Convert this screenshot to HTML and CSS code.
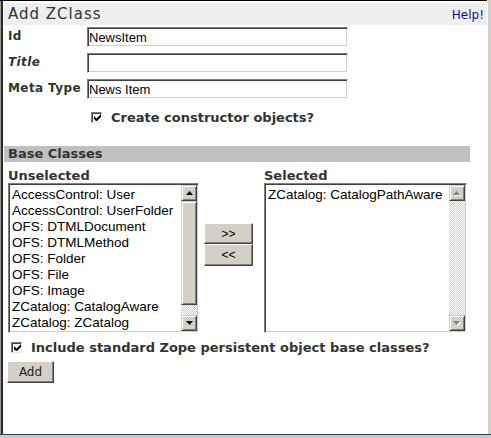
FILE: index.html
```html
<!DOCTYPE html>
<html>
<head>
<meta charset="utf-8">
<link rel="stylesheet" href="styles.css">
</head>
<body>
<div class="window">
  <div class="main">
    <div class="content">
      <div class="header">
        <span class="title">Add ZClass</span>
        <a class="help">Help!</a>
      </div>
      <div class="fields">
        <span class="label">Id</span>
        <input class="text" type="text" value="NewsItem">
        <span class="label italic">Title</span>
        <input class="text" type="text" value="">
        <span class="label">Meta Type</span>
        <input class="text" type="text" value="News Item">
      </div>
      <div class="check-row ctor">
        <span class="checkbox"><svg width="7" height="7" viewBox="0 0 7 7"><path d="M0 2v3l2 2h1l4-4V0L2.5 4.5z" fill="#000"/></svg></span>
        <span class="clabel">Create constructor objects?</span>
      </div>
      <div class="bar">Base Classes</div>
      <div class="lists">
        <div class="col left">
          <div class="collabel">Unselected</div>
          <div class="listbox lb-left">
            <div class="items">
              <div>AccessControl: User</div>
              <div>AccessControl: UserFolder</div>
              <div>OFS: DTMLDocument</div>
              <div>OFS: DTMLMethod</div>
              <div>OFS: Folder</div>
              <div>OFS: File</div>
              <div>OFS: Image</div>
              <div>ZCatalog: CatalogAware</div>
              <div>ZCatalog: ZCatalog</div>
            </div>
            <div class="sb">
              <div class="sb-btn"><svg width="7" height="4" viewBox="0 0 7 4"><polygon points="3.5,0 7,4 0,4" fill="#000"/></svg></div>
              <div class="sb-thumb"></div>
              <div class="sb-track"></div>
              <div class="sb-btn"><svg width="7" height="4" viewBox="0 0 7 4"><polygon points="0,0 7,0 3.5,4" fill="#000"/></svg></div>
            </div>
          </div>
        </div>
        <div class="movers">
          <button class="btn mover">&gt;&gt;</button>
          <button class="btn mover">&lt;&lt;</button>
        </div>
        <div class="col right">
          <div class="collabel">Selected</div>
          <div class="listbox lb-right">
            <div class="items">
              <div>ZCatalog: CatalogPathAware</div>
            </div>
            <div class="sb">
              <div class="sb-btn"><svg width="8" height="5" viewBox="0 0 8 5"><polygon points="4.5,1 8,5 1,5" fill="#fff"/><polygon points="3.5,0 7,4 0,4" fill="#808080"/></svg></div>
              <div class="sb-track"></div>
              <div class="sb-btn"><svg width="8" height="5" viewBox="0 0 8 5"><polygon points="1,1 8,1 4.5,5" fill="#fff"/><polygon points="0,0 7,0 3.5,4" fill="#808080"/></svg></div>
            </div>
          </div>
        </div>
      </div>
      <div class="check-row incl">
        <span class="checkbox"><svg width="7" height="7" viewBox="0 0 7 7"><path d="M0 2v3l2 2h1l4-4V0L2.5 4.5z" fill="#000"/></svg></span>
        <span class="clabel">Include standard Zope persistent object base classes?</span>
      </div>
      <div class="actions">
        <button class="btn add">Add</button>
      </div>
    </div>
    <div class="rstrip"></div>
  </div>
  <div class="status"></div>
</div>
</body>
</html>
```
FILE: styles.css
```css
html, body {
  margin: 0;
  padding: 0;
  background: #fff;
}
body {
  width: 491px;
  height: 438px;
  overflow: hidden;
  font-family: "DejaVu Sans", Verdana, sans-serif;
  color: #333;
}
.window {
  display: flex;
  flex-direction: column;
  height: 438px;
}
.main {
  flex: 1;
  display: flex;
  border-bottom: 1px solid #3a4250;
  min-height: 0;
}
.content {
  flex: 1;
  padding: 3px 0 0 4px;
  box-shadow: inset 0 1px #000, inset 1px 0 #9a9a9a, inset 3px 0 #2a2a2a;
  background: #fff;
}
.rstrip {
  width: 4px;
  background: #d4d0c8;
  box-shadow: inset 1px 0 #fff;
}
.status {
  height: 3px;
  background: #c4ccd8;
}

.header {
  height: 22px;
  background: #efefef;
  display: flex;
  justify-content: space-between;
  align-items: center;
}
.title {
  font-size: 15px;
  letter-spacing: 1px;
  padding-left: 4px;
  color: #333;
}
.help {
  font-size: 12px;
  color: #1010a0;
  padding-right: 3px;
  padding-top: 2px;
}

.fields {
  display: grid;
  grid-template-columns: 79px 261px;
  row-gap: 6px;
  margin-top: 2px;
  padding-left: 4px;
}
.label {
  font-size: 12px;
  font-weight: bold;
  letter-spacing: 0.4px;
  line-height: 14px;
  padding-top: 2px;
  color: #333;
}
.italic {
  font-style: italic;
}
.text {
  box-sizing: border-box;
  width: 261px;
  height: 20px;
  margin: 0;
  padding: 0 1px;
  font-family: "Liberation Sans", Arial, sans-serif;
  font-size: 13px;
  color: #000;
  background: #fff;
  border: 1px solid;
  border-color: #808080 #fff #fff #808080;
  box-shadow: inset 1px 1px #404040, inset -1px -1px #d4d0c8;
  outline: none;
}

.check-row {
  display: flex;
  align-items: center;
  height: 16px;
}
.ctor {
  margin-top: 10px;
  padding-left: 87px;
}
.incl {
  margin-top: 6px;
  padding-left: 7px;
}
.checkbox {
  box-sizing: border-box;
  width: 11px;
  height: 11px;
  flex: none;
  display: flex;
  align-items: center;
  justify-content: center;
  background: #fff;
  border: 1px solid;
  border-color: #808080 #e8e8e8 #e8e8e8 #808080;
  box-shadow: inset 1px 1px #404040;
  padding: 1px 0 0 1px;
}
.checkbox svg {
  display: block;
}
.clabel {
  margin-left: 9px;
  font-size: 13px;
  font-weight: bold;
  color: #333;
  white-space: nowrap;
}

.bar {
  margin-top: 21px;
  margin-right: 17px;
  height: 16px;
  line-height: 16px;
  background: #c0c0c0;
  padding-left: 4px;
  font-size: 13px;
  font-weight: bold;
  color: #333;
}

.lists {
  display: flex;
  align-items: flex-start;
}
.col.left {
  margin-left: 4px;
}
.col.right {
  margin-left: 11px;
}
.collabel {
  margin-top: 6px;
  height: 15px;
  line-height: 15px;
  font-size: 13px;
  font-weight: bold;
  color: #333;
}
.listbox {
  box-sizing: border-box;
  height: 150px;
  display: flex;
  background: #fff;
  border: 1px solid;
  border-color: #808080 #fff #fff #808080;
  box-shadow: inset 1px 1px #404040, inset -1px -1px #d4d0c8;
  padding: 1px;
}
.lb-left {
  width: 191px;
}
.lb-right {
  width: 203px;
}
.items {
  flex: 1;
  min-width: 0;
  padding: 2px 2px 0;
  font-family: "Liberation Sans", Arial, sans-serif;
  font-size: 13.5px;
  line-height: 16px;
  color: #000;
  white-space: nowrap;
  overflow: hidden;
}
.sb {
  width: 16px;
  display: flex;
  flex-direction: column;
}
.sb-btn, .sb-thumb {
  box-sizing: border-box;
  background: #d4d0c8;
  border: 1px solid;
  border-color: #d4d0c8 #404040 #404040 #d4d0c8;
  box-shadow: inset 1px 1px #fff, inset -1px -1px #808080;
}
.sb-btn {
  height: 16px;
  display: flex;
  align-items: center;
  justify-content: center;
}
.sb-btn svg {
  display: block;
}
.sb-thumb {
  height: 104px;
}
.sb-track {
  flex: 1;
  background: repeating-conic-gradient(#d4d0c8 0 25%, #fff 0 50%) 0 0 / 2px 2px;
}

.movers {
  margin-left: 5px;
  padding-top: 61px;
  display: flex;
  flex-direction: column;
}
.btn {
  box-sizing: border-box;
  margin: 0;
  padding: 0;
  background: #d4d0c8;
  color: #000;
  border: 1px solid;
  border-color: #fff #404040 #404040 #fff;
  box-shadow: inset -1px -1px #808080;
  cursor: default;
}
.mover {
  width: 49px;
  height: 21px;
  font-family: "Liberation Sans", Arial, sans-serif;
  font-size: 12px;
}
.mover + .mover {
  height: 22px;
}

.actions {
  margin-top: 6px;
  padding-left: 3px;
}
.add {
  width: 47px;
  height: 22px;
  font-family: "DejaVu Sans", Verdana, sans-serif;
  font-size: 12px;
  color: #222;
}
```
